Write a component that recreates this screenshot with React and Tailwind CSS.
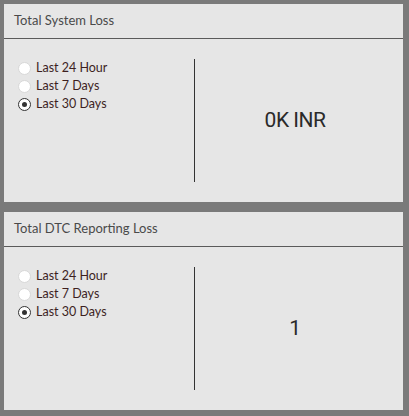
import React from "react";

function Radio({ checked }) {
  return checked ? (
    <span className="w-[13px] h-[13px] rounded-full bg-white border border-[#333] flex items-center justify-center shrink-0">
      <span className="w-[5px] h-[5px] rounded-full bg-[#333]" />
    </span>
  ) : (
    <span className="w-[13px] h-[13px] rounded-full bg-white border border-[#d8d8d8] shrink-0" />
  );
}

function Panel({ title, value }) {
  const opts = ["Last 24 Hour", "Last 7 Days", "Last 30 Days"];
  return (
    <div className="w-[399px] h-[198px] bg-[#e6e6e6] flex flex-col">
      <div className="h-[35px] border-b border-[#5a5a5a] flex items-center pl-[10px] text-[13px] text-[#4a4a4a]">
        {title}
      </div>
      <div className="flex-1 flex py-[20px]">
        <div className="w-[191px] border-r border-[#333] pl-[14px] pt-0">
          <div className="flex flex-col">
            {opts.map((o, i) => (
              <div key={o} className="h-[18px] flex items-center gap-[5px] text-[12.5px] text-[#3d1f1f]">
                <Radio checked={i === 2} />
                <span>{o}</span>
              </div>
            ))}
          </div>
        </div>
        <div
          className="flex-1 flex items-center justify-center pr-[8px] text-[21px] tracking-[-0.5px] text-[#2a2a2a]"
          style={{ fontFamily: "Roboto, sans-serif" }}
        >
          {value}
        </div>
      </div>
    </div>
  );
}

export default function App() {
  return (
    <div className="w-[409px] h-[416px] bg-[#7a7a7a] pt-[4px] pl-[4px] flex flex-col gap-[10px]" style={{ fontFamily: 'Lato, sans-serif' }}>
      <Panel title="Total System Loss" value="0K INR" />
      <Panel title="Total DTC Reporting Loss" value="1" />
    </div>
  );
}
